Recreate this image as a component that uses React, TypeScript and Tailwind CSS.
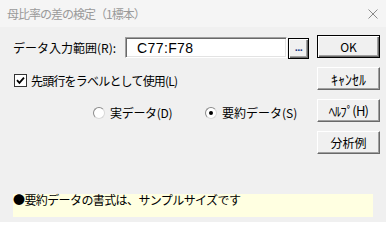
import type { ReactNode } from "react";

const Btn = ({ children, isDefault }: { children: ReactNode; isDefault?: boolean }) => {
  return (
    <button
      className={
        isDefault
          ? "w-[63px] h-[23px] bg-[#f0f0f0] border border-black shadow-[inset_1px_1px_0_#ffffff,inset_-1px_-1px_0_#696969,inset_-2px_-2px_0_#a0a0a0] flex items-center justify-center text-[12px] leading-none"
          : "w-[63px] h-[23px] bg-[#f0f0f0] border border-t-white border-l-white border-r-[#696969] border-b-[#696969] shadow-[inset_-1px_-1px_0_#a0a0a0] flex items-center justify-center text-[12px] leading-none"
      }
    >
      {children}
    </button>
  );
};

const Radio = ({ checked }: { checked?: boolean }) => (
  <span className="w-[12px] h-[12px] rounded-full bg-white border border-t-[#8a8a8a] border-l-[#8a8a8a] border-r-[#d8d8d8] border-b-[#d8d8d8] flex items-center justify-center shrink-0">
    {checked && <span className="w-[4px] h-[4px] rounded-full bg-black" />}
  </span>
);

export default function App() {
  return (
    <div className="w-[386px] h-[222px] bg-[#f0f0f0] flex flex-col overflow-hidden font-['Noto_Sans_CJK_JP',sans-serif] text-black text-[12px]">
      {/* title bar */}
      <div className="h-[27px] bg-[#f5f5f5] flex items-center justify-between pl-[7px] pr-[8px]">
        <span className="text-[12px] leading-none tracking-[-1px] text-[#9a9a9a]">
          母比率の差の検定（1標本）
        </span>
        <svg width="10" height="10" viewBox="0 0 10 10" className="text-[#8a8a8a]">
          <path d="M0.5 0.5 L9.5 9.5 M9.5 0.5 L0.5 9.5" stroke="currentColor" strokeWidth="1" fill="none" />
        </svg>
      </div>

      <div className="flex">
        <div className="flex-1 pl-[13px] pt-[10px]">
          {/* range */}
          <div className="flex items-start h-[22px]">
            <span className="w-[112px] h-[21px] flex items-center leading-none">データ入力範囲(R):</span>
            <div className="w-[162px] h-[21px] bg-white border border-t-[#a0a0a0] border-l-[#a0a0a0] border-r-white border-b-white shadow-[inset_1px_1px_0_#696969,inset_-1px_-1px_0_#e3e3e3] flex items-center pl-[11px]">
              <span className="font-['Liberation_Sans',sans-serif] text-[14px] leading-none tracking-[0.4px]">C77:F78</span>
            </div>
            <button className="w-[21px] h-[21px] mt-[1px] ml-[1px] bg-[#f0f0f0] border border-black shadow-[inset_1px_1px_0_#ffffff,inset_-1px_-1px_0_#696969,inset_-2px_-2px_0_#a0a0a0] flex items-end justify-center pb-[5px] font-['Liberation_Sans',sans-serif] font-bold text-[11px] leading-none tracking-[-0.5px] text-[#24408a]">
              ...
            </button>
          </div>

          {/* checkbox */}
          <div className="flex items-center h-[13px] mt-[15px] gap-[4px]">
            <span className="w-[13px] h-[13px] ml-[1px] bg-white border border-[#333333] flex items-center justify-center shrink-0">
              <svg width="9" height="9" viewBox="0 0 9 9">
                <path d="M1 4.2 L3.4 6.8 L8 1.6" stroke="#000" strokeWidth="1.8" fill="none" />
              </svg>
            </span>
            <span className="leading-none tracking-[-0.8px]">先頭行をラベルとして使用(L)</span>
          </div>

          {/* radios */}
          <div className="flex items-center h-[12px] mt-[20px] pl-[80px]">
            <div className="w-[112px] flex items-center gap-[5px]">
              <Radio />
              <span className="leading-none tracking-[-0.3px]">実データ(D)</span>
            </div>
            <div className="flex items-center gap-[5px]">
              <Radio checked />
              <span className="leading-none">要約データ(S)</span>
            </div>
          </div>
        </div>

        {/* buttons */}
        <div className="flex flex-col gap-[9px] pt-[8px] pr-[6px]">
          <Btn isDefault>OK</Btn>
          <Btn>
            <span className="text-[14px] tracking-[0px]">ｷｬﾝｾﾙ</span>
          </Btn>
          <Btn>
            <span className="text-[13px] tracking-[-0.8px]">ﾍﾙﾌﾟ(H)</span>
          </Btn>
          <Btn>分析例</Btn>
        </div>
      </div>

      {/* note */}
      <div className="mx-[13px] mt-auto mb-[5px] h-[23px] bg-[#ffffe1]">
        <span className="block leading-[12px] tracking-[-0.6px]">●要約データの書式は、サンプルサイズです</span>
      </div>
    </div>
  );
}
